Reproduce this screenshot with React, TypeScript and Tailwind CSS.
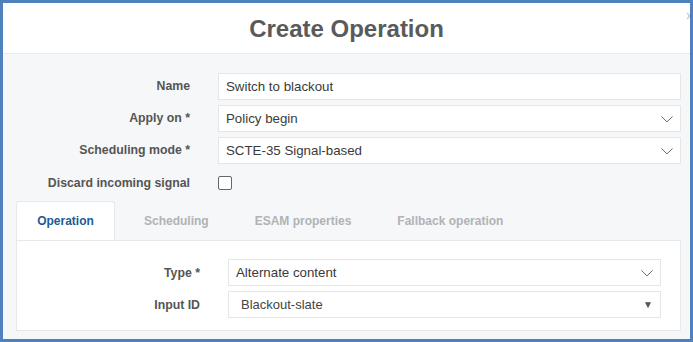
import React from "react";

const font = { fontFamily: '"Liberation Sans", Arial, sans-serif' };

function Chevron() {
  return (
    <svg width="14" height="14" viewBox="0 0 24 24" fill="none" stroke="#5b5b5b" strokeWidth="1.6" strokeLinecap="round" strokeLinejoin="round">
      <path d="M3 8l9 9 9-9" />
    </svg>
  );
}

function Row({ label, children, labelW, gap }: { label: string; children: React.ReactNode; labelW: string; gap: string }) {
  return (
    <div className="flex items-center">
      <div className={`${labelW} shrink-0 text-right text-[12.3px] font-bold text-[#555]`}>{label}</div>
      <div className={`${gap} flex-1`}>{children}</div>
    </div>
  );
}

function Field({ text, chevron, triangle, small }: { text: string; chevron?: boolean; triangle?: boolean; small?: boolean }) {
  return (
    <div className="flex h-[27px] items-center justify-between border border-[#e4e6e8] bg-white pl-[7px] pr-[6px]">
      <span className={small ? "pl-[5px] text-[13px] text-[#444]" : "text-[13.3px] text-[#3a3a3a]"}>{text}</span>
      {chevron && <Chevron />}
      {triangle && <span className="mr-[1px] text-[10px] text-[#555]">▼</span>}
    </div>
  );
}

export default function App() {
  return (
    <div style={font} className="relative h-[342px] w-[693px] overflow-hidden border-[3px] border-[#4f81bd] bg-[#f5f7f9]">
      <div className="flex h-[51px] items-center justify-center border-b border-[#e9ecef] bg-white pt-[2px]">
        <h1 className="text-[24px] font-bold text-[#5a5a5a]">Create Operation</h1>
      </div>
      <span className="absolute right-[-4px] top-[3px] text-[14px] text-[#bbb]">×</span>
      <div className="flex flex-col gap-[5px] pr-[9px] pt-[19px]">
        <Row label="Name" labelW="w-[187px]" gap="ml-[28px]"><Field text="Switch to blackout" /></Row>
        <Row label="Apply on *" labelW="w-[187px]" gap="ml-[28px]"><Field text="Policy begin" chevron /></Row>
        <Row label="Scheduling mode *" labelW="w-[187px]" gap="ml-[28px]"><Field text="SCTE-35 Signal-based" chevron /></Row>
        <div className="mt-[5px] flex items-center">
          <div className="w-[187px] shrink-0 text-right text-[12.3px] font-bold text-[#555]">Discard incoming signal</div>
          <div className="ml-[28px] h-[14px] w-[14px] rounded-[2px] border border-[#666] bg-white" />
        </div>
      </div>
      <div className="ml-[13px] mr-[9px] mt-[9px]">
        <div className="flex text-[12px] font-bold">
          <div className="relative z-10 -mb-px flex h-[39px] w-[99px] items-center justify-center rounded-t-[3px] border border-b-0 border-[#e6e8ea] bg-white text-[#1e5a96]">Operation</div>
          <div className="flex h-[39px] items-center pl-[29px] text-[#b0b3b6]">Scheduling</div>
          <div className="flex h-[39px] items-center pl-[46px] text-[#b0b3b6]">ESAM properties</div>
          <div className="flex h-[39px] items-center pl-[46px] text-[#b0b3b6]">Fallback operation</div>
        </div>
        <div className="flex h-[91px] flex-col gap-[5px] border border-[#e6e8ea] bg-white pr-[19px] pt-[18px]">
          <Row label="Type *" labelW="w-[183px]" gap="ml-[28px]"><Field text="Alternate content" chevron /></Row>
          <Row label="Input ID" labelW="w-[183px]" gap="ml-[28px]"><Field text="Blackout-slate" triangle small /></Row>
        </div>
      </div>
    </div>
  );
}
